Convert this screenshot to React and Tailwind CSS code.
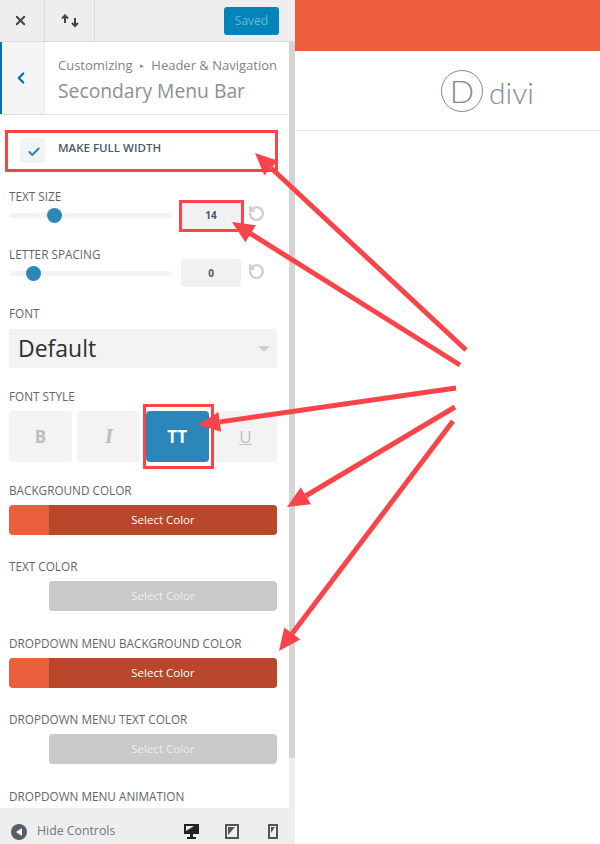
import { X, ChevronLeft, Check, RotateCcw } from 'lucide-react'

const FONT = { fontFamily: "'Open Sans', sans-serif" }

// tail -> tip of the annotation arrows
const ARROWS = [
  [466, 350, 255, 153],
  [460, 365, 232, 222],
  [456, 388, 198, 425],
  [455, 407, 287, 507],
  [453, 421, 279, 651],
]

function Label({ children }) {
  return <div className="text-[11.75px] leading-[16px] text-[#5f666b] uppercase whitespace-nowrap">{children}</div>
}

function SliderRow({ label, value, thumb }) {
  return (
    <div>
      <Label>{label}</Label>
      <div className="flex items-center mt-[-3px] h-[28px]">
        <div className="relative w-[163px] h-[5px] bg-[#f3f3f3] rounded-full">
          <div className="absolute top-[-5px] w-[15px] h-[15px] rounded-full bg-[#2b87ba]" style={{ left: thumb }} />
        </div>
        <div className="ml-[9px] w-[60px] h-[28px] bg-[#f1f1f1] rounded-[3px] flex items-center justify-center text-[10px] font-bold text-[#4c5866]">
          {value}
        </div>
        <RotateCcw className="ml-[7px] mb-[4px] w-[17px] h-[17px] text-[#cfcfcf]" strokeWidth={3.5} />
      </div>
    </div>
  )
}

function ColorRow({ label, active }) {
  return (
    <div>
      <Label>{label}</Label>
      <div className={`mt-[7px] h-[30px] flex rounded-[4px] overflow-hidden ${active ? 'bg-[#ea5f3c]' : 'bg-white'}`}>
        <div className="w-[40px]" />
        <div className={`flex-1 flex items-center justify-center text-[11.5px] font-medium ${active ? 'bg-[#b9472b] text-white' : 'bg-[#c9c9c9] text-[#eeeeee] rounded-[3px]'}`}>
          Select Color
        </div>
      </div>
    </div>
  )
}

function StyleButton({ children, active }) {
  return (
    <div className={`w-[63px] h-[51px] rounded-[4px] flex items-center justify-center text-[17px] font-bold ${active ? 'bg-[#2b87ba] text-white' : 'bg-[#f3f3f3] text-[#bdbdbd]'}`}>
      {children}
    </div>
  )
}

function Arrow({ from }) {
  const [x1, y1, x2, y2] = from
  const a = Math.atan2(y2 - y1, x2 - x1)
  const len = 22
  const w = 10
  const bx = x2 - Math.cos(a) * len
  const by = y2 - Math.sin(a) * len
  const px = -Math.sin(a) * w
  const py = Math.cos(a) * w
  return (
    <g>
      <line x1={x1} y1={y1} x2={bx} y2={by} stroke="#f9444a" strokeWidth="5" />
      <polygon points={`${x2},${y2} ${bx + px},${by + py} ${bx - px},${by - py}`} fill="#f9444a" />
    </g>
  )
}

export default function App() {
  return (
    <div className="relative w-[600px] h-[844px] overflow-hidden bg-white flex" style={FONT}>
      {/* Customizer panel */}
      <div className="w-[295px] h-full flex flex-col bg-white">
        <div className="h-[42px] shrink-0 bg-[#eeeeee] flex border-b border-[#dddddd]">
          <div className="w-[45px] pr-[3px] flex items-center justify-center border-r border-[#dddddd]">
            <X className="w-[15px] h-[15px] text-[#444]" strokeWidth={3} />
          </div>
          <div className="w-[50px] flex items-center justify-center border-r border-[#dddddd]">
            <svg width="18" height="14" viewBox="0 0 18 14" fill="none" stroke="#444" strokeWidth="2">
              <path d="M4 9V1.5M1 4.5l3-3 3 3" />
              <path d="M14 4v8M11 9l3 3 3-3" />
            </svg>
          </div>
          <div className="flex-1 flex items-center justify-end pr-[16px]">
            <div className="w-[55px] h-[28px] rounded-[3px] bg-[#0085ba] flex items-center justify-center text-[12px] text-[#6fb6d6]">Saved</div>
          </div>
        </div>

        <div className="flex-1 min-h-0 flex">
          <div className="w-[289px] min-h-0 overflow-hidden">
            <div className="h-[73px] flex border-b border-[#dddddd]">
              <div className="w-[45px] pr-[5px] bg-[#f5f5f5] border-l-[2px] border-[#0073aa] border-r border-r-[#eeeeee] flex items-center justify-center">
                <ChevronLeft className="w-[18px] h-[18px] text-[#0073aa]" strokeWidth={3} />
              </div>
              <div className="pl-[13px] pt-[14px] whitespace-nowrap">
                <div className="text-[13px] leading-[18px] text-[#7d8388]">Customizing <span className="text-[7px] align-[2px] mx-[4px]">▸</span> Header &amp; Navigation</div>
                <div className="text-[19.3px] leading-[27px] text-[#8a9096] mt-[2px]">Secondary Menu Bar</div>
              </div>
            </div>

            <div className="px-[9px]">
              <div className="relative mt-[17px] h-[36px] flex items-center">
                <div className="w-[25px] h-[25px] ml-[11px] mt-[1px] pt-[3px] pl-[2px] bg-[#f3f3f3] rounded-[3px] flex items-center justify-center">
                  <Check className="w-[14px] h-[14px] text-[#2b87ba]" strokeWidth={3.5} />
                </div>
                <div className="ml-[13px] text-[11.5px] font-semibold text-[#4c5866] uppercase mb-[5px]">Make full width</div>
              </div>

              <div className="mt-[20px]"><SliderRow label="Text Size" value="14" thumb={38} /></div>
              <div className="mt-[17px]"><SliderRow label="Letter Spacing" value="0" thumb={17} /></div>

              <div className="mt-[18px]">
                <Label>Font</Label>
                <div className="mt-[8px] w-[268px] h-[39px] bg-[#f3f3f3] flex items-center justify-between pl-[9px] pr-[7px] text-[23px] text-[#2f2f2f]">
                  Default
                  <div className="w-0 h-0 border-x-[6px] border-x-transparent border-t-[6px] border-t-[#d0d0d0]" />
                </div>
              </div>

              <div className="mt-[20px]">
                <Label>Font Style</Label>
                <div className="mt-[7px] w-[268px] flex justify-between">
                  <StyleButton>B</StyleButton>
                  <StyleButton><span className="italic font-serif text-[21px]">I</span></StyleButton>
                  <StyleButton active>TT</StyleButton>
                  <StyleButton><span className="underline font-normal">U</span></StyleButton>
                </div>
              </div>

              <div className="w-[268px]">
                <div className="mt-[20px]"><ColorRow label="Background Color" active /></div>
                <div className="mt-[23px]"><ColorRow label="Text Color" /></div>
                <div className="mt-[24px]"><ColorRow label="Dropdown Menu Background Color" active /></div>
                <div className="mt-[23px]"><ColorRow label="Dropdown Menu Text Color" /></div>
                <div className="mt-[24px]"><Label>Dropdown Menu Animation</Label></div>
              </div>
            </div>
          </div>
          {/* scrollbar */}
          <div className="w-[6px] bg-[#eeeeee]">
            <div className="h-[716px] bg-[#d4d4d4]" />
          </div>
        </div>

        {/* Footer */}
        <div className="h-[36px] shrink-0 bg-[#eeeeee] flex items-center pl-[11px] pt-[11px]">
          <div className="w-[16px] h-[16px] rounded-full bg-[#555d66] flex items-center justify-center">
            <div className="w-0 h-0 border-y-[4px] border-y-transparent border-r-[6px] border-r-white mr-[1px]" />
          </div>
          <div className="ml-[10px] text-[12.3px] text-[#70777d]">Hide Controls</div>
          <div className="ml-auto flex items-center pr-[17px]">
            <svg width="17" height="16" viewBox="0 0 17 16">
              <path d="M1 0h15v10H1z" fill="#222" />
              <path d="M3 2h8L3 7z" fill="#eee" />
              <path d="M7 10h3v3h3v2H4v-2h3z" fill="#222" />
            </svg>
            <svg className="ml-[25px]" width="14" height="15" viewBox="0 0 14 15">
              <path d="M1 1h12v13H1z" fill="none" stroke="#555" strokeWidth="2" />
              <path d="M3 3h7l-7 8z" fill="#555" />
            </svg>
            <svg className="ml-[29px]" width="10" height="15" viewBox="0 0 10 15">
              <path d="M1 1h8v13H1z" fill="none" stroke="#555" strokeWidth="2" />
              <path d="M3 3h4l-4 6z" fill="#555" />
            </svg>
          </div>
        </div>
      </div>

      {/* Site preview */}
      <div className="flex-1 flex flex-col" style={{ fontFamily: "Lato, sans-serif" }}>
        <div className="h-[51px] bg-[#ee5c3e]" />
        <div className="h-[80px] border-b border-[#e4e4e4] flex items-center pl-[146px]">
          <div className="w-[42px] h-[42px] rounded-full border-[1.5px] border-[#7f8a9c] flex items-center justify-center text-[32px] font-light text-[#7f8a9c]">D</div>
          <div className="ml-[6px] mt-[3px] text-[30px] leading-none font-light text-[#7f8a9c]">divi</div>
        </div>
      </div>

      {/* Annotations */}
      <div className="absolute left-[5px] top-[130px] w-[273px] h-[42px] border-[3px] border-[#f9444a]" />
      <div className="absolute left-[179px] top-[200px] w-[65px] h-[32px] border-[3px] border-[#f9444a]" />
      <div className="absolute left-[143px] top-[404px] w-[71px] h-[65px] border-[3px] border-[#f9444a]" />
      <svg className="absolute inset-0 pointer-events-none" width="600" height="844">
        {ARROWS.map((a, i) => <Arrow key={i} from={a} />)}
      </svg>
    </div>
  )
}
